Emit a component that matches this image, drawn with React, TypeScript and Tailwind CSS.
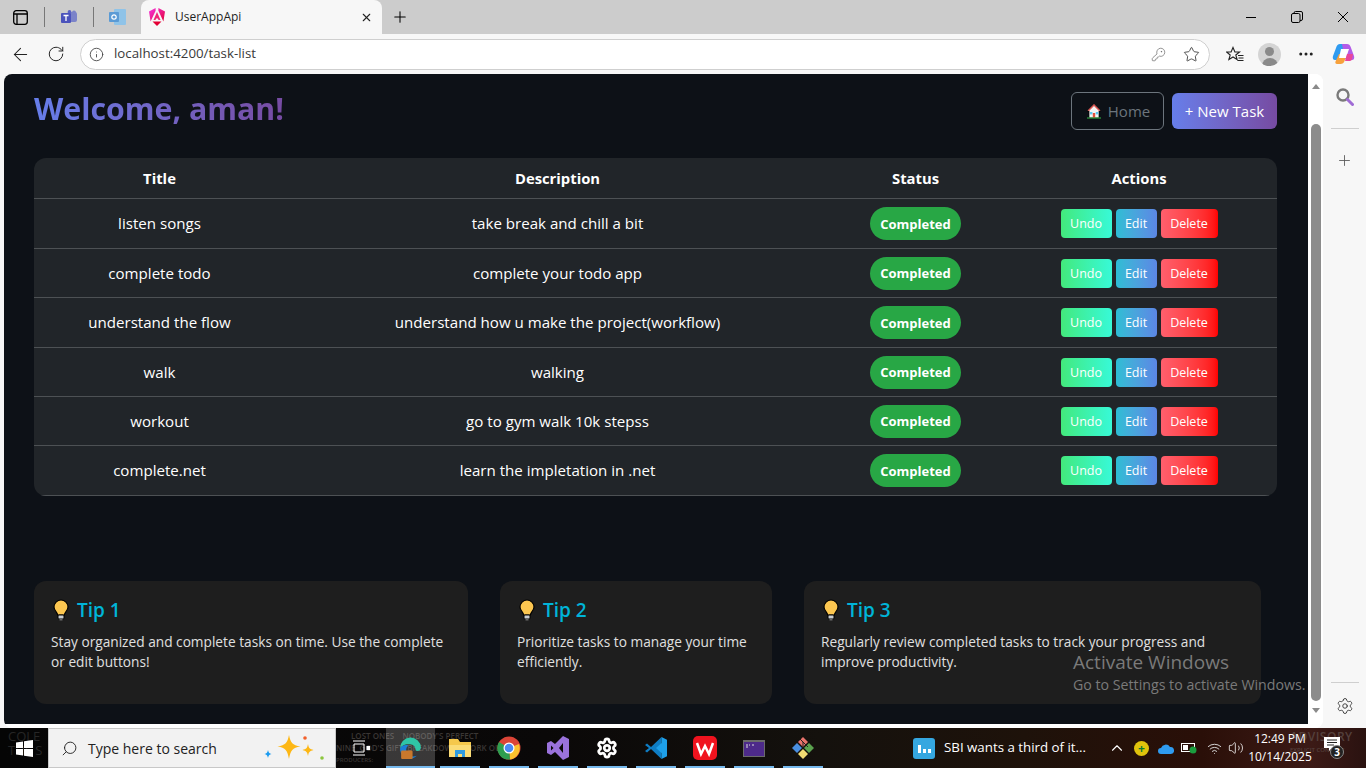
import React from "react";
import { ArrowLeft, RotateCw, Info, KeyRound, Star, MoreHorizontal, Search, Plus, Settings, X, ChevronUp, Volume2, Wifi } from "lucide-react";

const font = "font-['Open_Sans','Noto_Sans',sans-serif]";

const tasks = [
  ["listen songs", "take break and chill a bit", "h-[50px]"],
  ["complete todo", "complete your todo app", "h-[49px]"],
  ["understand the flow", "understand how u make the project(workflow)", "h-[50px]"],
  ["walk", "walking", "h-[49px]"],
  ["workout", "go to gym walk 10k stepss", "h-[49px]"],
  ["complete.net", "learn the impletation in .net", "h-[50px]"],
];

const tips = [
  ["Tip 1", "Stay organized and complete tasks on time. Use the complete or edit buttons!", "w-[434px]"],
  ["Tip 2", "Prioritize tasks to manage your time efficiently.", "w-[272px]"],
  ["Tip 3", "Regularly review completed tasks to track your progress and improve productivity.", "w-[457px]"],
];

const Bulb = () => (
  <svg width="18" height="22" viewBox="0 0 18 22" className="ml-px shrink-0">
    <path d="M9 1a7 7 0 0 0-7 7c0 2.600 1.500 4 2.600 5.600.6.900.9 1.700 1 2.400h6.800c.1-.7.4-1.500 1-2.400C14.500 12 16 10.600 16 8a7 7 0 0 0-7-7z" fill="#fcc650" stroke="#000" strokeWidth="1.200" />
    <rect x="6" y="16" width="6" height="4" rx="1" fill="#c8ccd0" stroke="#000" strokeWidth="1" />
    <rect x="7.500" y="20" width="3" height="1.500" fill="#666" />
  </svg>
);

const House = () => (
  <svg width="16" height="16" viewBox="0 0 16 16" className="shrink-0">
    <path d="M8 1 1 8h2v7h10V8h2z" fill="#f4f4f4" stroke="#000" strokeWidth=".7" />
    <path d="M8 1 1.500 7.500 3 8l5-5 5 5 1.500-.5z" fill="#d9534f" />
    <rect x="4" y="9" width="2.400" height="2.400" fill="#5cc8f0" />
    <rect x="9.800" y="9" width="2.400" height="2.400" fill="#5cc8f0" />
    <rect x="6.800" y="10" width="2.400" height="5" fill="#e2503c" />
    <rect x="1" y="14.400" width="14" height="1.200" fill="#2e9e3f" />
  </svg>
);

const AngularLogo = () => (
  <svg width="18" height="20" viewBox="0 0 18 20">
    <defs>
      <linearGradient id="ng" x1="0" y1="0" x2="1" y2="1">
        <stop offset="0" stopColor="#f637e3" />
        <stop offset="1" stopColor="#e40035" />
      </linearGradient>
    </defs>
    <path d="M7.600 1 1 4.400l1.600 10L7.600 3.800zM10.400 1 17 4.400l-1.600 10L10.400 3.800z" fill="url(#ng)" />
    <path d="M9 5 5.500 13h2l.6-1.600h1.800l.6 1.600h2z" fill="#f0287a" />
    <path d="M4.500 14.500h9L9 19z" fill="#e40035" />
  </svg>
);

const CopilotLogo = () => (
  <svg width="24" height="24" viewBox="0 0 24 24">
    <path d="M8 2h6l-4 13c-.6 2-2 3-4 3H3C1 18 .4 16 1 14l3-8c.7-2.500 2-4 4-4z" fill="#2f9bf0" />
    <path d="M10 2h5c2 0 3 1 3.700 3L22 14c.6 2 0 4-2 4h-4c-2 0-3-1-3.500-3z" fill="#b45ce8" />
    <path d="M7 12h8l-2.500 7c-.6 2-2 3-4 3H5c-1.500 0-2-1-1.500-2.500z" fill="#f7a13c" />
    <path d="M9 7h8l-3 9H7z" fill="#fff" />
    <path d="M15 12h6l-1 5c-.4 2-2 2-3 2h-4z" fill="#e8479a" />
  </svg>
);

const TaskbarIcon = ({ children, active }: { children: React.ReactNode; active?: boolean }) => (
  <div className={`flex h-full w-[49px] flex-col items-center justify-between ${active ? "bg-white/20" : ""}`}>
    <div className="flex flex-1 items-center justify-center pt-[2px]">{children}</div>
    <div className={`h-[2px] bg-[#76b9ed] ${active ? "w-full" : "w-[40px]"}`} />
  </div>
);

const App = () => {
  return (
    <div className={`flex h-screen w-screen flex-col overflow-hidden bg-[#cccccc] ${font}`}>
      {/* tab strip */}
      <div className="flex h-[34px] shrink-0 items-center bg-[#cccccc]">
        <div className="flex w-[44px] justify-start pl-[13px]">
          <svg width="15" height="15" viewBox="0 0 15 15" fill="none" stroke="#000" strokeWidth="1.300">
            <rect x=".7" y=".7" width="13.600" height="13.600" rx="2.500" />
            <path d="M.7 4h13.600M4 4v10.300" />
          </svg>
        </div>
        <div className="h-[20px] w-px bg-[#777]" />
        <div className="flex w-[48px] justify-center">
          <svg width="17" height="15" viewBox="0 0 17 15">
            <rect x="6" y="2" width="10" height="10" rx="2" fill="#7b83c9" />
            <circle cx="13" cy="2.500" r="2" fill="#7b83c9" />
            <circle cx="8.500" cy="1.800" r="1.800" fill="#5a62c3" />
            <rect x="0" y="3" width="10" height="10" rx="1" fill="#4b53bc" />
            <path d="M2.500 5.500h5M5 5.500V11" stroke="#fff" strokeWidth="1.300" />
          </svg>
        </div>
        <div className="h-[20px] w-px bg-[#777]" />
        <div className="flex w-[47px] justify-center">
          <svg width="17" height="16" viewBox="0 0 17 16">
            <rect x="5" y="0" width="12" height="16" rx="1" fill="#8fc3e8" />
            <rect x="0" y="3" width="10" height="10" rx="1" fill="#5b9bd5" />
            <circle cx="5" cy="8" r="2.200" fill="none" stroke="#fff" strokeWidth="1.200" />
          </svg>
        </div>
        <div className="flex h-full w-[241px] items-center rounded-t-[8px] bg-[#f7f7f7] pl-[7px] pr-[9px]">
          <AngularLogo />
          <span className="ml-[9px] flex-1 text-[12px] text-[#1f1f1f]">UserAppApi</span>
          <X size={13} strokeWidth={2} className="text-[#222]" />
        </div>
        <div className="ml-[9px] flex items-center">
          <Plus size={18} strokeWidth={1.400} className="text-black" />
        </div>
        <div className="flex-1" />
        <div className="flex items-center gap-[34px] pr-[17px]">
          <svg width="12" height="12" viewBox="0 0 12 12" stroke="#000" strokeWidth="1">
            <path d="M1 6.500h10" />
          </svg>
          <svg width="12" height="12" viewBox="0 0 12 12" fill="none" stroke="#000" strokeWidth="1">
            <rect x=".5" y="2.500" width="8.500" height="9" rx="1.500" />
            <path d="M3 2.500V2a1.500 1.500 0 0 1 1.500-1.500h5.500A1.500 1.500 0 0 1 11.500 2v6A1.500 1.500 0 0 1 10 9.500H9" />
          </svg>
          <svg width="12" height="12" viewBox="0 0 12 12" stroke="#000" strokeWidth="1">
            <path d="M1 1l10 10M11 1 1 11" />
          </svg>
        </div>
      </div>

      {/* address bar */}
      <div className="flex h-[40px] shrink-0 items-center bg-[#f7f7f7]">
        <div className="flex w-[38px] justify-center pl-[2px]">
          <ArrowLeft size={21} strokeWidth={1.200} className="text-[#222]" />
        </div>
        <div className="flex w-[36px] justify-center">
          <RotateCw size={18} strokeWidth={1.300} className="text-[#222]" />
        </div>
        <div className="ml-[6px] flex h-[31px] w-[1130px] items-center rounded-full border border-[#cfcfcf] bg-white pl-[8px] pr-[9px]">
          <Info size={15} strokeWidth={1.400} className="text-[#444]" />
          <span className="ml-[10px] flex-1 text-[13.300px] text-[#3a3a3a]">localhost:4200/task-list</span>
          <KeyRound size={15} strokeWidth={1.100} className="text-[#666]" />
          <Star size={17} strokeWidth={1.200} className="ml-[17px] text-[#333]" />
        </div>
        <div className="ml-[16px] flex items-center">
          <svg width="18" height="17" viewBox="0 0 18 17" fill="none" stroke="#222" strokeWidth="1.100">
            <path d="M7 1.500 8.900 6h4.600l-3.700 3 1.300 4.500L7 11l-4.100 2.500L4.200 9 .5 6h4.600z" />
            <path d="M12 9.500h5.500M12.500 12h5M11.500 14.500h6" />
          </svg>
          <div className="relative ml-[14px] flex h-[23px] w-[23px] items-center justify-center overflow-hidden rounded-full bg-[#d4d4d4]">
            <div className="absolute top-[4px] h-[9px] w-[9px] rounded-full bg-[#8a8a8a]" />
            <div className="absolute top-[15px] h-[10px] w-[16px] rounded-t-full bg-[#8a8a8a]" />
          </div>
          <MoreHorizontal size={18} className="ml-[16px] text-[#222]" />
          <div className="ml-[17px]">
            <CopilotLogo />
          </div>
        </div>
      </div>

      {/* browser body */}
      <div className="flex h-[654px] shrink-0 bg-[#f7f7f7]">
        <div className="w-[4px]" />
        <div className="relative flex w-[1319px] overflow-hidden rounded-[8px] bg-white">
          <main className="h-[650px] w-[1304px] bg-[#0d1117] pl-[30px]">
            <div className="flex w-[1243px] items-start justify-between pt-[14px]">
              <h1 className="mt-px bg-gradient-to-r from-[#667eea] to-[#764ba2] bg-clip-text text-[30.300px] font-bold leading-[40px] text-transparent">
                Welcome, aman!
              </h1>
              <div className="flex items-center gap-[8px] pt-[4px]">
                <button className="flex h-[38px] w-[93px] items-center justify-center gap-[6px] rounded-[6px] border border-[#6c757d] pl-px text-[15px] text-[#6c757d]">
                  <House /> Home
                </button>
                <button className="h-[36px] w-[105px] rounded-[6px] bg-gradient-to-r from-[#667eea] to-[#764ba2] text-[15px] text-white">
                  + New Task
                </button>
              </div>
            </div>

            <div className="mt-[28px] w-[1243px] overflow-hidden rounded-[12px] bg-[#212529] text-white">
              <div className="grid h-[41px] grid-cols-[251px_545px_171px_276px] items-center border-b border-[#4d5154] text-center text-[14.800px] font-bold">
                <div>Title</div>
                <div>Description</div>
                <div>Status</div>
                <div>Actions</div>
              </div>
              {tasks.map(([title, desc, h]) => (
                <div
                  key={title}
                  className={`grid ${h} grid-cols-[251px_545px_171px_276px] items-center border-b border-[#4d5154] text-center text-[15.100px]`}
                >
                  <div>{title}</div>
                  <div>{desc}</div>
                  <div className="flex justify-center">
                    <span className="flex h-[33px] w-[91px] items-center justify-center rounded-full bg-[#28a745] pt-[2px] text-[13px] font-bold">
                      Completed
                    </span>
                  </div>
                  <div className="flex justify-center gap-[4px] text-[12.500px]">
                    <button className="h-[29px] w-[51px] rounded-[4px] bg-gradient-to-r from-[#43e97b] to-[#38f9d7] pt-[2px]">Undo</button>
                    <button className="h-[29px] w-[41px] rounded-[4px] bg-gradient-to-r from-[#2cbed4] to-[#5b86e5] pt-[2px]">Edit</button>
                    <button className="h-[29px] w-[57px] rounded-[4px] bg-gradient-to-r from-[#ff5f6d] to-[#ff0000] pt-[2px]">Delete</button>
                  </div>
                </div>
              ))}
            </div>

            <div className="mt-[85px] flex gap-[32px]">
              {tips.map(([title, text, w]) => (
                <div key={title} className={`${w} h-[123px] rounded-[12px] bg-[#1e1e1e] px-[17px] pt-[17px]`}>
                  <div className="flex h-[24px] items-center gap-[7px]">
                    <Bulb />
                    <span className="text-[19px] font-semibold text-[#00b4d8]">{title}</span>
                  </div>
                  <p className="mt-[10px] text-[13.700px] leading-[20px] text-[#e0e0e0]">{text}</p>
                </div>
              ))}
            </div>
          </main>

          {/* scrollbar */}
          <div className="flex w-[15px] flex-col items-center bg-white">
            <div className="mt-[10px] h-0 w-0 border-x-[4px] border-b-[5px] border-x-transparent border-b-[#8a8a8a]" />
            <div className="mt-[35px] h-[577px] w-[10px] rounded-full bg-[#8c8c8c]" />
            <div className="mt-[7px] h-0 w-0 border-x-[4px] border-t-[5px] border-x-transparent border-t-[#8a8a8a]" />
          </div>

          <div className="pointer-events-none absolute left-[1069px] top-[575px] text-[#7a7a7a]">
            <div className="text-[19px] leading-[26px]">Activate Windows</div>
            <div className="mt-px whitespace-nowrap text-[14.200px] leading-[18px]">Go to Settings to activate Windows.</div>
          </div>
        </div>

        {/* edge sidebar */}
        <div className="flex flex-1 flex-col items-center pt-[13px] text-[#555]">
          <svg width="19" height="19" viewBox="0 0 19 19" fill="none">
            <circle cx="8" cy="8" r="5.500" stroke="#7a7a7a" strokeWidth="2.400" />
            <path d="M12.500 12.500 17.500 17.500" stroke="#a06cd5" strokeWidth="3" strokeLinecap="round" />
          </svg>
          <div className="mt-[22px] h-px w-[28px] bg-[#cfcfcf]" />
          <Plus size={17} strokeWidth={1.200} className="mt-[23px]" />
          <div className="flex-1" />
          <div className="mb-[14px] h-px w-[28px] bg-[#cfcfcf]" />
          <Settings size={18} strokeWidth={1.200} className="mb-[13px] text-[#333]" />
        </div>
      </div>

      {/* taskbar */}
      <div className="relative h-[40px] shrink-0 overflow-hidden bg-[linear-gradient(90deg,#050505_0%,#0a0808_40%,#14110d_60%,#1e120a_75%,#2a0f08_88%,#3c1a16_96%,#2a1210_100%)] text-white">
        {/* wallpaper lettering behind the taskbar */}
        <div className="absolute left-[8px] top-[1px] text-[13px] leading-[14px] text-[#262626]">
          <div>COLE</div>
          <div>THE S</div>
        </div>
        <div className="absolute left-[336px] top-[2px] whitespace-nowrap text-[8px] font-semibold leading-[12px] text-[#3a3634]">
          <div className="pl-[15px]">LOST ONES &nbsp;&nbsp; NOBODY'S PERFECT</div>
          <div>NINE &nbsp;GOD'S GIFT &nbsp;BREAKDOWN &nbsp;WORK OUT</div>
          <div className="text-[6px]">PRODUCERS:</div>
        </div>
        <div className="absolute left-[1290px] top-[3px] whitespace-nowrap leading-none text-[#54403c]">
          <div className="text-[12px] font-semibold tracking-[.5px]">ADVISORY</div>
          <div className="mt-[4px] text-[6px] font-semibold">EXPLICIT CONTENT</div>
        </div>

        <div className="relative flex h-full w-full items-center">
          <div className="flex w-[48px] justify-center">
            <svg width="17" height="17" viewBox="0 0 17 17" fill="#fff">
              <path d="M0 2.400 7 1.400V8H0zM8 1.300 17 0v8H8zM0 9h7v6.600L0 14.600zM8 9h9v8l-9-1.300z" />
            </svg>
          </div>
          <div className="flex h-full w-[288px] items-center border border-[#c8c8c8] bg-[#f2f2f2] pl-[12px] text-[#222]">
            <Search size={17} strokeWidth={1.300} className="scale-x-[-1]" />
            <span className="ml-[10px] flex-1 text-[14px]">Type here to search</span>
            <svg width="62" height="30" viewBox="0 0 62 30" className="mr-[9px]">
              <path d="M14 3c1.700 8 3.300 10 11.500 11.500C17.300 16 15.700 18 14 27c-1.700-9-3.300-11-11.500-12.500C10.700 13 12.300 11 14 3z" fill="#fdb714" transform="translate(11 -1)" />
              <path d="M44 11c.7 4 1.700 5 5.500 6-3.800 1-4.800 2-5.500 6-.7-4-1.700-5-5.500-6 3.800-1 4.800-2 5.500-6z" fill="#fdb714" />
              <path d="M4 17c.5 2.500 1.200 3.200 3.500 4-2.300.8-3 1.500-3.500 4-.5-2.500-1.200-3.200-3.500-4 2.300-.8 3-1.500 3.500-4z" fill="#1a9bf0" />
              <circle cx="41" cy="5" r="1.800" fill="#f2602b" />
              <circle cx="58" cy="25" r="1.800" fill="#8cc63f" />
            </svg>
          </div>
          <div className="flex w-[50px] justify-center">
            <svg width="18" height="16" viewBox="0 0 18 16" fill="none" stroke="#fff" strokeWidth="1">
              <path d="M1 1h12M1 15h12M2 4h10v8H2z" />
              <rect x="15" y="6.500" width="2.500" height="3" fill="#fff" />
            </svg>
          </div>
          <TaskbarIcon active>
            <svg width="25" height="25" viewBox="0 0 24 24">
              <path d="M2 12a10 10 0 0 1 20-1c0 3-3 4-5 3 0-4-3-7-7-6-4 0-7 2-8 4z" fill="#2fc5a6" />
              <path d="M2 12c1-3 5-4 8-3-3 2-3 7 1 10 2 1 5 1 7 0-2 2-4 3-7 3-6 0-9-5-9-10z" fill="#1a7fd8" />
              <rect x="3" y="14" width="11" height="8" rx="1" fill="#c9782c" />
            </svg>
          </TaskbarIcon>
          <TaskbarIcon>
            <svg width="24" height="22" viewBox="0 0 24 22">
              <path d="M1 2h9l2 3h11v15H1z" fill="#f5c84c" />
              <path d="M1 8h22v12H1z" fill="#fbdc76" />
              <path d="M7 13h10v7h-3v-3h-4v3H7z" fill="#2f9be0" />
            </svg>
          </TaskbarIcon>
          <TaskbarIcon>
            <svg width="24" height="24" viewBox="0 0 24 24">
              <circle cx="12" cy="12" r="11.500" fill="#db4437" />
              <path d="M12 12 22 8a11.500 11.500 0 0 1-9 15.500z" fill="#fbc02d" />
              <path d="M12 12 13 23.500A11.500 11.500 0 0 1 2 6z" fill="#2e9e4f" />
              <circle cx="12" cy="12" r="5.500" fill="#fff" />
              <circle cx="12" cy="12" r="4.300" fill="#4a8af4" />
            </svg>
          </TaskbarIcon>
          <TaskbarIcon>
            <svg width="24" height="26" viewBox="0 0 24 26">
              <path d="M17 1 23 4v18l-6 3-8-8-4 3-4-2V8l4-2 4 3zM17 8l-4 5 4 5zM5 10.500v5l2.500-2.500z" fill="#9a72dc" fillRule="evenodd" />
            </svg>
          </TaskbarIcon>
          <TaskbarIcon>
            <Settings size={22} strokeWidth={3} className="text-white" />
          </TaskbarIcon>
          <TaskbarIcon>
            <svg width="24" height="24" viewBox="0 0 24 24">
              <path d="M17.500 1 7 11 3 7.500 1 9l4 3-4 3 2 1.500L7 13l10.500 10z" fill="#0f7dc4" />
              <path d="M17.500 1 23 3.700v16.600L17.500 23zM17.500 7 12 12l5.500 5z" fill="#1ea0ea" />
            </svg>
          </TaskbarIcon>
          <TaskbarIcon>
            <svg width="24" height="24" viewBox="0 0 24 24">
              <rect width="24" height="24" rx="5" fill="#f0131e" />
              <path d="M4 7l4 11 4-8 4 8 4-11" fill="none" stroke="#fff" strokeWidth="2.500" />
            </svg>
          </TaskbarIcon>
          <TaskbarIcon>
            <svg width="22" height="17" viewBox="0 0 22 17">
              <rect width="22" height="17" fill="#6b6b6b" />
              <rect x="1" y="2" width="20" height="14" fill="#4d2a8a" />
              <path d="M3 5h2M6 5h1M9 5h2M3 7h2" stroke="#ddd" strokeWidth="1" />
            </svg>
          </TaskbarIcon>
          <TaskbarIcon>
            <svg width="24" height="24" viewBox="0 0 24 24">
              <path d="M12 1l5 5-5 5-5-5z" fill="#e8736c" />
              <path d="M6 7l5 5-5 5-5-5z" fill="#4a8ee0" />
              <path d="M18 7l5 5-5 5-5-5z" fill="#5aa24e" />
              <path d="M12 13l5 5-5 5-5-5z" fill="#f2dc73" />
              <path d="M9 3l8 8M12 6v6" stroke="#222" strokeWidth="1" />
            </svg>
          </TaskbarIcon>

          <div className="flex-1" />

          <div className="flex items-center">
            <div className="flex h-[21px] w-[22px] items-end justify-center gap-[2px] rounded-[3px] bg-[#35a7e0] pb-[6px]">
              <div className="h-[8px] w-[3px] bg-white" />
              <div className="h-[4px] w-[3px] bg-white" />
              <div className="h-[4px] w-[3px] bg-white" />
            </div>
            <span className="ml-[9px] w-[159px] text-[13.300px] text-white">SBI wants a third of it...</span>
            <ChevronUp size={18} strokeWidth={1.500} className="ml-[5px]" />
            <div className="ml-[8px] h-[15px] w-[15px] rounded-full bg-[#e0c30c] text-center text-[12px] font-bold leading-[15px] text-[#0a7a33]">+</div>
            <svg width="16" height="11" viewBox="0 0 16 11" className="ml-[9px]">
              <path d="M3 11a3 3 0 0 1 0-6 5 5 0 0 1 9-1 3.500 3.500 0 0 1 1 7z" fill="#2f9bf0" />
            </svg>
            <svg width="16" height="12" viewBox="0 0 16 12" className="ml-[7px]">
              <rect x=".5" y="1.500" width="13" height="8" fill="none" stroke="#fff" />
              <rect x="2" y="3" width="5" height="5" fill="#fff" />
              <circle cx="12" cy="8" r="3.500" fill="#1b9e3e" />
            </svg>
            <Wifi size={15} strokeWidth={1.500} className="ml-[10px] text-[#ddd]" />
            <Volume2 size={16} strokeWidth={1.200} className="ml-[6px]" />
            <div className="ml-[3px] w-[66px] text-center text-[12px] leading-[18px]">
              <div>12:49 PM</div>
              <div>10/14/2025</div>
            </div>
            <div className="relative ml-[10px] mr-[23px] h-[22px] w-[20px]">
              <svg width="16" height="15" viewBox="0 0 16 15" className="ml-px">
                <path d="M0 0h16v11H8l-3 3v-3H0z" fill="#fff" />
                <path d="M3 3h10M3 5.500h10M3 8h7" stroke="#222" strokeWidth="1" />
              </svg>
              <div className="absolute -right-[1px] top-[8px] flex h-[14px] w-[14px] items-center justify-center rounded-full border border-[#888] bg-[#222] text-[10px] font-bold">3</div>
            </div>
          </div>
        </div>
      </div>
    </div>
  );
};

export default App;
